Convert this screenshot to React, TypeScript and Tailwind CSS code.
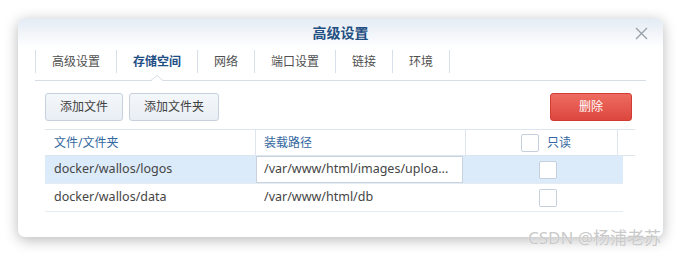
import React from "react";

const tabs = ["高级设置", "存储空间", "网络", "端口设置", "链接", "环境"];

const rows = [
  { folder: "docker/wallos/logos", path: "/var/www/html/images/uploa...", selected: true },
  { folder: "docker/wallos/data", path: "/var/www/html/db", selected: false },
];

function Checkbox() {
  return <span className="block w-[18px] h-[18px] bg-white border border-[#c5d0dc] rounded-[2px]" />;
}

export default function App() {
  return (
    <div
      className="relative w-[681px] h-[256px] bg-white overflow-hidden pt-[18px] pl-[18px]"
      style={{ fontFamily: '"Noto Sans", "Noto Sans CJK SC", sans-serif' }}
    >
      {/* Dialog */}
      <div className="w-[645px] h-[219px] bg-white rounded-[7px] shadow-[0_3px_14px_rgba(0,0,0,0.28)] overflow-hidden">
        {/* Title bar */}
        <div className="relative h-[30px] flex items-center justify-center bg-gradient-to-b from-[#e4ebf4] to-white">
          <span className="text-[14px] font-bold text-[#1f4f82] leading-none">高级设置</span>
          <svg className="absolute right-[15px] top-[9px] w-[13px] h-[13px]" viewBox="0 0 13 13" fill="none">
            <path d="M1 1L12 12M12 1L1 12" stroke="#9aa1a8" strokeWidth="1.4" />
          </svg>
        </div>

        {/* Tabs */}
        <div className="mx-[17px] h-[33px] border-b border-[#d6dde5] flex items-start">
          {tabs.map((t, i) => (
            <div
              key={t}
              className={`relative mt-[2px] h-[23px] px-[16px] flex items-center border-l border-[#d7e0ea] ${
                i === tabs.length - 1 ? "border-r" : ""
              }`}
            >
              <span
                className={`text-[12px] leading-none ${
                  i === 1 ? "font-bold text-[#1f4f85]" : "text-[#505050]"
                }`}
              >
                {t}
              </span>
              {i === 1 && (
                <svg
                  className="absolute left-1/2 -translate-x-1/2 bottom-[-8px] w-[12px] h-[6px]"
                  viewBox="0 0 12 6"
                >
                  <path d="M0 6L6 0.5L12 6Z" fill="white" />
                  <path d="M0 5.5L6 0.5L12 5.5" fill="none" stroke="#d6dde5" strokeWidth="1" />
                </svg>
              )}
            </div>
          ))}
        </div>

        {/* Body */}
        <div className="pl-[27px] pr-[28px] pt-[12px]">
          {/* Toolbar */}
          <div className="flex items-center gap-[6px] h-[28px]">
            <button className="h-[28px] w-[78px] text-[12px] text-[#404040] bg-gradient-to-b from-[#f4f7fa] to-[#e9eef4] border border-[#c6d1dd] rounded-[3px]">
              添加文件
            </button>
            <button className="h-[28px] w-[90px] text-[12px] text-[#404040] bg-gradient-to-b from-[#f4f7fa] to-[#e9eef4] border border-[#c6d1dd] rounded-[3px]">
              添加文件夹
            </button>
            <button className="ml-auto mr-[3px] h-[28px] w-[82px] text-[12px] text-white bg-gradient-to-b from-[#ee6b61] to-[#dd463d] border border-[#d03c33] rounded-[3px]">
              删除
            </button>
          </div>

          {/* Table */}
          <div className="mt-[8px] w-[590px]">
            <div className="flex h-[27px] border-t border-b border-[#dde6ef] text-[12px] text-[#3468a0]">
              <div className="w-[211px] flex items-center pl-[9px] border-r border-[#dde6ef]">文件/文件夹</div>
              <div className="w-[210px] flex items-center pl-[8px] border-r border-[#dde6ef]">装载路径</div>
              <div className="w-[152px] flex items-center pl-[55px] gap-[8px] border-r border-[#dde6ef]">
                <Checkbox />
                <span>只读</span>
              </div>
              <div className="flex-1" />
            </div>
            {rows.map((r) => (
              <div
                key={r.folder}
                className={`flex h-[28px] w-[578px] border-b border-[#e4ebf2] text-[12.5px] text-[#454545] ${
                  r.selected ? "bg-[#dcebf9]" : ""
                }`}
              >
                <div className="w-[211px] flex items-center pl-[9px]">{r.folder}</div>
                <div className="w-[210px] flex items-center">
                  {r.selected ? (
                    <div className="w-[207px] h-[27px] bg-white border border-[#c8d3df] flex items-center pl-[7px] whitespace-nowrap">
                      {r.path}
                    </div>
                  ) : (
                    <span className="pl-[8px]">{r.path}</span>
                  )}
                </div>
                <div className="flex-1 flex items-center pl-[73px]">
                  <Checkbox />
                </div>
              </div>
            ))}
          </div>
        </div>
      </div>

      {/* Watermark */}
      <div className="absolute left-[528px] top-[229px] text-[17px] leading-none text-[#c9c9c9] whitespace-nowrap [text-shadow:0_0_1px_rgba(255,255,255,0.9)]">
        CSDN @杨浦老苏
      </div>
    </div>
  );
}
